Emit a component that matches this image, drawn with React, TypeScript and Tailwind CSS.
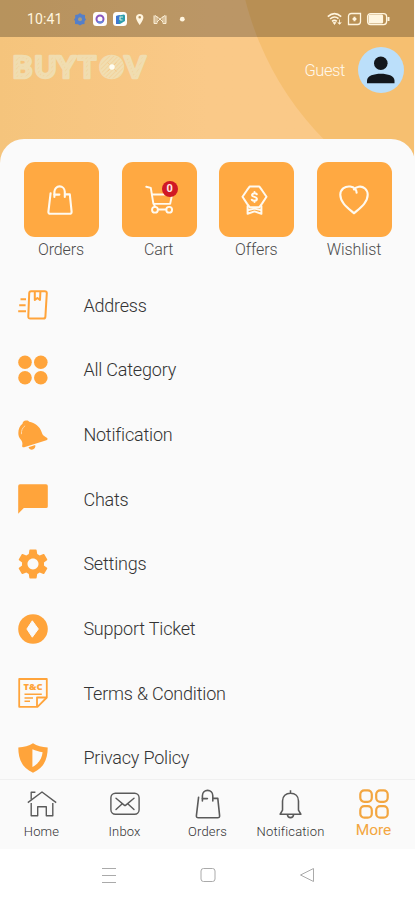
import React from 'react';

type IconProps = { className?: string };

const BagIcon = ({ className }: IconProps) => (
  <svg viewBox="0 0 26 30" fill="none" stroke="currentColor" strokeLinecap="round" strokeLinejoin="round" className={className}>
    <path d="M3.6 8.2 1.4 26.6Q1.2 28.8 3.4 28.8H22.6Q24.8 28.8 24.6 26.6L22.8 9.4H18.2" />
    <path d="M7.4 12V6.8C7.4 3.6 9.8 1.4 12.6 1.4S17.8 3.6 17.8 6.8V12" />
    <path d="M7.4 9.6H12.4" />
  </svg>
);

const CartIcon = ({ className }: IconProps) => (
  <svg viewBox="0 0 30 30" fill="none" stroke="currentColor" strokeLinecap="round" strokeLinejoin="round" className={className}>
    <path d="M1.3 1.8 6 3 8.7 19.5H26L28.2 9" />
    <path d="M7.2 9.8H20" />
    <circle cx="10.3" cy="25.6" r="3" />
    <circle cx="25" cy="25.6" r="3" />
    <path d="M9.2 19.5 10.3 22.4M13.5 25.4H22" />
  </svg>
);

const OfferIcon = ({ className }: IconProps) => (
  <svg viewBox="0 0 27 30" fill="none" stroke="currentColor" strokeLinecap="round" strokeLinejoin="round" className={className}>
    <path d="M8.6 1.6H18.4L21 5.2 25.5 11.8 21 18.6 18.4 22.2H8.6L6 18.6 1.5 11.8 6 5.2Z" />
    <path d="M6.6 21V28.8L13.5 26.4 20.4 28.8V21M7.5 25 13.5 23.6 19.5 25" />
    <path d="M15.8 9.2C14.6 7.9 11 8 11 10.2 11 12.4 15.9 11.4 15.9 13.9 15.9 16.1 12 16 10.8 14.7M13.5 7V8.2M13.5 15.8V17" />
  </svg>
);

const HeartIcon = ({ className }: IconProps) => (
  <svg viewBox="0 0 30 30" fill="none" stroke="currentColor" strokeLinecap="round" strokeLinejoin="round" className={className}>
    <path d="M17.6 7.8C17.8 4.8 15.2 2 11.2 1.5 5.8.9 1.3 4.4 1.3 9.8 1.3 17.7 9 23 15 28.3 21 23 28.7 17.7 28.7 9.8 28.7 4.4 24.4 1 19.8 1.7 17.6 2 16 3.2 15 4.5" />
  </svg>
);

const AddressIcon = () => (
  <svg viewBox="0 0 30 30" fill="none" stroke="currentColor" strokeWidth="2" strokeLinejoin="round" className="size-[30px]">
    <path d="M13.2 1.2H26.7Q28.9 1.2 28.8 3.2L27.4 26.6Q27.3 28.6 25.3 28.6H12.4Q10.2 28.6 10.3 26.6L11.2 3.2Q11.3 1.2 13.2 1.2Z" />
    <path d="M16.8 1.5V10L19.4 8 22 10 22.4 1.5" />
    <path d="M2.5 9.2H8M1.2 15.2H7.6M.2 21.2H8" />
  </svg>
);

const CategoryIcon = () => (
  <svg viewBox="0 0 30 30" fill="currentColor" className="size-[30px]">
    <circle cx="7" cy="7.3" r="6.8" />
    <circle cx="22.8" cy="7.3" r="6.8" />
    <circle cx="7" cy="22.8" r="6.8" />
    <circle cx="22.8" cy="22.8" r="6.8" />
  </svg>
);

const BellFillIcon = () => (
  <svg viewBox="0 0 30 30" className="size-[30px]">
    <path fill="currentColor" d="M4.5 3.8C4.5 1.8 6.3.4 8.2.6 9.2.2 10.5.8 11.2 1.7 16.8 2.4 22 6.6 23.7 12.2 24.8 15.8 26.7 16.2 28.8 17.7 30 18.6 29.7 19.8 28.4 20.2L6.2 27.2C4.8 27.7 3.9 26.8 4.2 25.5 4.8 22.7 4.1 21.2 2.1 18.7-.8 15-.2 7.4 4.5 3.8Z" />
    <path fill="currentColor" d="M10.5 27.2 17.2 25.1C17.8 27.1 16.7 29 14.8 29.5 12.8 30 11.1 29 10.5 27.2Z" />
    <path fill="none" stroke="#fcd9ad" strokeWidth="1" strokeLinecap="round" d="M3.4 13.8C3.2 10.5 4.4 7.7 6.8 6" />
  </svg>
);

const ChatIcon = () => (
  <svg viewBox="0 0 30 30" fill="currentColor" className="size-[30px]">
    <path d="M2 .3H28Q29.8.3 29.8 2V22.4Q29.8 24.1 28 24.1H5.8L.2 29.8V2Q.2.3 2 .3Z" />
  </svg>
);

const GearIcon = () => (
  <svg viewBox="2.2 2 19.6 20" fill="currentColor" preserveAspectRatio="none" className="size-[30px]">
    <path d="M19.14 12.94c.04-.3.06-.61.06-.94 0-.32-.02-.64-.07-.94l2.03-1.58c.18-.14.23-.41.12-.61l-1.92-3.32c-.12-.22-.37-.29-.59-.22l-2.39.96c-.5-.38-1.03-.7-1.62-.94l-.36-2.54c-.04-.24-.24-.41-.48-.41h-3.84c-.24 0-.43.17-.47.41l-.36 2.54c-.59.24-1.13.57-1.62.94l-2.39-.96c-.22-.08-.47 0-.59.22L2.74 8.87c-.12.21-.08.47.12.61l2.03 1.58c-.05.3-.09.63-.09.94s.02.64.07.94l-2.03 1.58c-.18.14-.23.41-.12.61l1.92 3.32c.12.22.37.29.59.22l2.39-.96c.5.38 1.03.7 1.62.94l.36 2.54c.05.24.24.41.48.41h3.84c.24 0 .44-.17.47-.41l.36-2.54c.59-.24 1.13-.56 1.62-.94l2.39.96c.22.08.47 0 .59-.22l1.92-3.32c.12-.22.07-.47-.12-.61l-2.01-1.58zM12 15.6c-1.98 0-3.6-1.62-3.6-3.6s1.62-3.6 3.6-3.6 3.6 1.62 3.6 3.6-1.62 3.6-3.6 3.6z" />
  </svg>
);

const TicketIcon = () => (
  <svg viewBox="0 0 30 30" className="size-[30px]">
    <circle cx="15" cy="15" r="14.8" fill="currentColor" />
    <path d="M14.3 6.8 8.9 15 14.3 23.2 20.3 15Z" fill="#fafafa" stroke="#fafafa" strokeLinejoin="round" />
  </svg>
);

const TermsIcon = () => (
  <svg viewBox="0 0 30 30" fill="none" stroke="currentColor" strokeWidth="1.8" strokeLinejoin="round" className="size-[30px]">
    <path d="M1.2 1H28.8V19.5L19.5 28.8H1.2Z" />
    <path d="M28.8 19.5H19V28.8" />
    <path d="M6.5 16.3H23.8M6.5 20H15M6.5 23.2H12" strokeWidth="1.4" />
    <text x="15" y="11.5" textAnchor="middle" textLength="19" lengthAdjust="spacingAndGlyphs" fill="currentColor" stroke="none" className="font-['Open_Sans',sans-serif] text-[9px] font-extrabold">T&amp;C</text>
  </svg>
);

const ShieldIcon = () => (
  <svg viewBox="0 0 30 30" className="size-[30px]">
    <path fill="currentColor" d="M15 .3C19 2.8 24 4.3 29.7 4.6 29.7 15.5 26.5 24.5 15 29.8 3.5 24.5.3 15.5.3 4.6 6 4.3 11 2.8 15 .3Z" />
    <path fill="#fafafa" d="M14.4 6.2C18 7.8 20.8 8.6 24.6 9.2 24 15.5 20.7 20.5 14.4 24.1Z" />
  </svg>
);

const HomeIcon = () => (
  <svg viewBox="0 0 30 28" fill="none" stroke="currentColor" strokeWidth="1.4" strokeLinejoin="round" className="h-[28px] w-[30px]">
    <path d="M.8 12.6 15 2 29.2 12.6" />
    <path d="M4.2 9.6V2.2H8.4M4.2 13V25.7H10.7V16.8H19.3V25.7H25.8V13" />
  </svg>
);

const InboxIcon = () => (
  <svg viewBox="0 0 30 28" fill="none" stroke="currentColor" strokeWidth="1.4" strokeLinecap="round" className="h-[28px] w-[30px]">
    <rect x=".9" y="3.3" width="28.2" height="21" rx="4.5" />
    <path d="M6 8.2 14.2 15.1Q15 15.8 15.8 15.1L24 8.2M6 19.6 11.7 14.2M18.3 14.2 24 19.6" />
  </svg>
);

const BellIcon = () => (
  <svg viewBox="0 0 24 28" fill="none" stroke="currentColor" strokeWidth="1.5" strokeLinejoin="round" className="h-[29px] w-[25px]">
    <path d="M12 .3V3M4.3 19.5V10.5C4.3 6 7.5 3.1 12 3.1S19.7 6 19.7 10.5V19.5L22 23.4H2Z" />
    <path d="M9 23.8C9.4 27.6 14.6 27.6 15 23.8" />
  </svg>
);

const MoreIcon = () => (
  <svg viewBox="0 0 30 30" fill="none" stroke="currentColor" strokeWidth="2.2" className="size-[30px]">
    <rect x="1.3" y="1.3" width="11.5" height="11.5" rx="4" />
    <rect x="17.2" y="1.3" width="11.5" height="11.5" rx="4" />
    <rect x="1.3" y="17.2" width="11.5" height="11.5" rx="4" />
    <rect x="17.2" y="17.2" width="11.5" height="11.5" rx="4" />
  </svg>
);

const Logo = () => (
  <svg viewBox="0 0 140 40" className="h-[40px] w-[140px] overflow-visible">
    <defs>
      <pattern id="stripes" width="3" height="3" patternUnits="userSpaceOnUse" patternTransform="rotate(45)">
        <rect width="3" height="3" fill="#f1deb1" />
        <rect width=".7" height="3" fill="#f3d098" />
      </pattern>
    </defs>
    <text x="0.5 22.3 44.3 66 87.6 112.6" y="30.8" fill="url(#stripes)" stroke="#f0ddb0" strokeWidth="2.6" strokeLinejoin="round" className="font-['Lato',sans-serif] text-[30px] font-black">BUYTOV</text>
    <circle cx="100" cy="20" r="11.5" fill="url(#stripes)" />
    <path d="M95.5 15.5 104.5 24.5M104.5 15.5 95.5 24.5" stroke="#f6cb8d" />
    <circle cx="100" cy="20" r="2.7" fill="#fffdf2" />
  </svg>
);

const StatusBar = () => (
  <div className="relative flex h-[37px] items-center bg-black/25 pl-[27px] pr-[24px] pt-px text-[#fff5df]">
    <span className="w-[47px] text-[14px] tracking-[0.1px]">10:41</span>
    <svg viewBox="0 0 116 16" className="h-4 w-[116px]">
      <path d="M6 2 8 3.5 11 4V7L12 8.5 10.5 10.5V13L8 13.2 6 14.5 4 13.2 1 13V10L0 8.5 1.2 7V4L4 3.5Z" fill="#557fc8" />
      <circle cx="6" cy="8.2" r="2" fill="#a49b82" />
      <rect x="19" y="1" width="14" height="14" rx="3.5" fill="#fffdfa" />
      <circle cx="26" cy="8" r="3.5" fill="none" stroke="#8956be" strokeWidth="2" />
      <path d="M23.5 10.5A3.5 3.5 0 0 0 29 10" fill="none" stroke="#6386db" strokeWidth="2" />
      <rect x="39" y="1" width="14" height="14" rx="3.5" fill="#fffdfa" />
      <path d="M42 5 50 3.5 51 4.5V10L46 13H42Z" fill="#2e9ead" />
      <path d="M42 5 46 4 44.5 11.5 46 13H42Z" fill="#4076d0" />
      <path d="M46 9V6H49M46 9H48.5" fill="none" stroke="#cdebdc" strokeWidth="1.2" />
      <path fillRule="evenodd" fill="currentColor" d="M65.7 3C63.5 3 62 4.5 62 6.5 62 9 65.7 14 65.7 14S69.4 9 69.4 6.5C69.4 4.5 67.9 3 65.7 3ZM65.7 5A1.3 1.3 0 1 1 65.7 7.6 1.3 1.3 0 1 1 65.7 5Z" />
      <path d="M81 12.5V4.5L86 8 91 4.5V12.5M80 4.5V12.5H83V5.5M92 4.5V12.5H89V5.5M83 11 86 8 89 11" fill="none" stroke="currentColor" strokeWidth=".9" />
      <circle cx="108.3" cy="8.2" r="2.4" fill="currentColor" />
    </svg>
    <svg viewBox="0 0 63 16" className="ml-auto h-4 w-[63px]" fill="none" stroke="currentColor" strokeWidth="1.3">
      <path d="M.8 5.6Q7.5-.2 14.2 5.6M3 8Q7.5 4.2 11.5 7.6M5 10.3Q7.5 8.4 9.8 10.3" strokeWidth="1.6" />
      <path d="M6.2 11.5H8.8L7.5 13.5ZM12.5 8.5V13M10.8 11.5 12.5 13.3 14.4 11.5" fill="currentColor" strokeWidth=".8" />
      <path d="M24.5 2.5H33.5V10.5Q33.5 13.5 30.5 13.5H21.5V5.5Q21.5 2.5 24.5 2.5Z" />
      <path d="M27.5 5.8V10.2M25.6 8H29.4" strokeWidth="2" />
      <rect x="40.6" y="2.6" width="19" height="11" rx="3" />
      <rect x="41.6" y="3.6" width="14.5" height="9" rx="1.5" fill="currentColor" stroke="none" />
      <path d="M61.5 6V10" strokeWidth="2" />
    </svg>
  </div>
);

const shortcuts = [
  { label: 'Orders', icon: <BagIcon className="h-[30px] w-[26px] -translate-x-[2px] stroke-[2.1]" /> },
  { label: 'Cart', icon: <CartIcon className="size-[29px] stroke-2" />, badge: 0 },
  { label: 'Offers', icon: <OfferIcon className="h-[30px] w-[27px] -translate-x-[2px] stroke-2" /> },
  { label: 'Wishlist', icon: <HeartIcon className="size-[30px] stroke-[2.1]" /> },
];

const menuItems = [
  { label: 'Address', icon: <AddressIcon /> },
  { label: 'All Category', icon: <CategoryIcon /> },
  { label: 'Notification', icon: <BellFillIcon /> },
  { label: 'Chats', icon: <ChatIcon /> },
  { label: 'Settings', icon: <GearIcon /> },
  { label: 'Support Ticket', icon: <TicketIcon /> },
  { label: 'Terms & Condition', icon: <TermsIcon /> },
  { label: 'Privacy Policy', icon: <ShieldIcon /> },
];

const tabs = [
  { label: 'Home', icon: <HomeIcon /> },
  { label: 'Inbox', icon: <InboxIcon /> },
  { label: 'Orders', icon: <BagIcon className="h-[30px] w-[26px] stroke-[1.6]" /> },
  { label: 'Notification', icon: <BellIcon /> },
  { label: 'More', icon: <MoreIcon />, active: true },
];

export default function App() {
  return (
    <div className="flex h-[900px] w-[415px] flex-col overflow-hidden bg-[#fafafa] font-['Roboto',sans-serif] text-[#4b4b4b]">
      <header className="relative mr-px h-[170px] shrink-0 overflow-hidden bg-gradient-to-r from-[#f5c47c] to-[#fac988] to-50%">
        {/* curved backdrop */}
        <svg viewBox="0 0 414 170" className="absolute inset-0 h-full w-full">
          <circle cx="542" cy="-75" r="306" fill="#f6bf70" />
        </svg>
        <StatusBar />
        <div className="relative flex h-[56px] items-start pl-[12px] pr-[10px] pt-[10px]">
          <Logo />
          <span className="ml-auto mr-[13px] mt-[12px] text-[16.5px] font-light leading-6 tracking-[-0.4px] text-[#fff8ec]">Guest</span>
          <svg viewBox="0 0 46 46" className="size-[46px]">
            <circle cx="23" cy="23" r="23" fill="#bbdffa" />
            <circle cx="22.8" cy="16.2" r="6.8" fill="#12171d" />
            <path d="M9 36.2V33.5C9 28.7 16 26.7 22.8 26.7S36.5 28.7 36.5 33.5V36.2Z" fill="#12171d" />
          </svg>
        </div>
      </header>

      <main className="relative -mt-[31px] flex min-h-0 flex-1 flex-col overflow-hidden rounded-t-[24px] bg-[#fafafa]">
        <div className="flex shrink-0 justify-between pl-[24px] pr-[23px] pt-[23px]">
          {shortcuts.map((item) => (
            <div key={item.label} className="flex w-[75px] flex-col items-center">
              <div className="relative flex size-[75px] items-center justify-center rounded-[11px] bg-[#ffa942] text-[#fffaf0]">
                {item.icon}
                {item.badge !== undefined && (
                  <span className="absolute right-[19px] top-[19px] flex size-4 items-center justify-center rounded-full bg-[#d01825] text-[11px] font-bold text-[#ffe9e6]">
                    {item.badge}
                  </span>
                )}
              </div>
              <span className="-ml-px mt-[1px] text-[16px] font-light leading-6 tracking-[-0.1px]">{item.label}</span>
            </div>
          ))}
        </div>

        <ul className="mt-[11px]">
          {menuItems.map((item) => (
            <li key={item.label} className="flex h-[64.67px] items-center pl-[18.4px]">
              <span className="w-[65px] text-[#ffa43b]">{item.icon}</span>
              <span className="text-[18px] font-light tracking-[-0.2px] text-[#333]">{item.label}</span>
            </li>
          ))}
        </ul>
      </main>

      <nav className="grid h-[70px] shrink-0 grid-cols-5 border-t border-[#f0f0f0] bg-[#fafafa]">
        {tabs.map((tab) => (
          <div key={tab.label} className={tab.active ? 'flex flex-col items-center text-[#f3a640]' : 'flex flex-col items-center text-[#5a5a5a]'}>
            <div className="mt-[8px] flex h-[32px] items-center justify-center">{tab.icon}</div>
            <span className={tab.active ? 'text-[15.5px] leading-5' : 'mt-[2px] text-[13px] font-light leading-5 tracking-[0.15px] text-[#333]'}>{tab.label}</span>
          </div>
        ))}
      </nav>

      <div className="flex h-[51px] shrink-0 items-center justify-center bg-white text-[#aaa]">
        <svg viewBox="0 0 16 16" className="h-4 w-4 fill-none stroke-current">
          <path d="M1 1.5H15M1 8.5H15M1 15.5H15" />
        </svg>
        <svg viewBox="0 0 16 16" className="mx-[83px] h-4 w-4 fill-none stroke-current">
          <rect x="1" y="1.5" width="14" height="13" rx="2.5" />
        </svg>
        <svg viewBox="0 0 16 16" className="h-4 w-4 fill-none stroke-current">
          <path d="M14.5 1.5V14.5L1.5 8Z" />
        </svg>
      </div>
    </div>
  );
}
